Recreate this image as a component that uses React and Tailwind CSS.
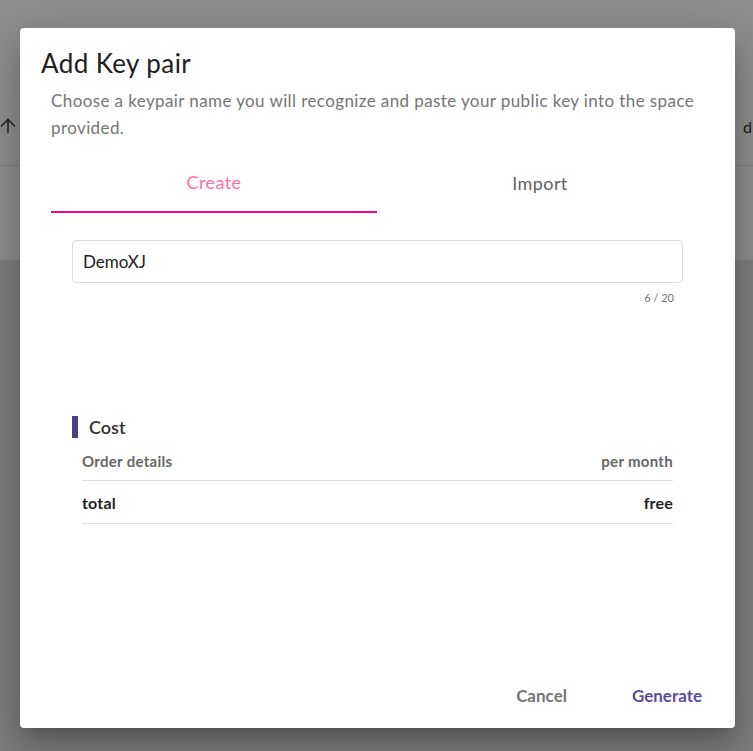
import { ArrowUp } from "lucide-react";

function CostTable() {
  return (
    <div className="mt-[5px] ml-[10px] mr-[10px]">
      <div className="flex justify-between py-[10px] border-b border-[#e0e0e0] text-[15px] leading-[17px] tracking-[0.3px] font-bold text-[#666666]">
        <span>Order details</span>
        <span>per month</span>
      </div>
      <div className="flex justify-between items-center h-[43px] border-b border-[#e0e0e0] text-[16px] leading-[17px] tracking-[0.2px] font-bold text-[#212121]">
        <span>total</span>
        <span>free</span>
      </div>
    </div>
  );
}

export default function App() {
  return (
    <div className="relative min-h-[751px] bg-[#e2e3e6] font-['Lato',sans-serif] overflow-hidden">
      {/* page behind the dialog */}
      <div className="h-[260px] bg-white">
        <div className="h-[166px] border-b border-[#e3e3e3] flex justify-between items-start pt-[115px] text-[#333333]">
          <ArrowUp size={22} strokeWidth={1.6} className="-ml-[3px]" />
          <span className="mt-[4px] mr-[1px] text-[16px] leading-[16px]">d</span>
        </div>
      </div>

      {/* backdrop */}
      <div className="absolute inset-0 bg-[rgba(0,0,0,0.44)]" />

      {/* dialog */}
      <div className="absolute left-[20px] top-[28px] w-[715px] h-[700px] bg-white rounded-[4px] flex flex-col shadow-[0px_11px_15px_-7px_rgba(0,0,0,0.2),0px_24px_38px_3px_rgba(0,0,0,0.14),0px_9px_46px_8px_rgba(0,0,0,0.12)]">
        <h2 className="pt-[20px] pl-[21px] text-[26px] leading-[30px] tracking-[0.4px] text-[#212121]">Add Key pair</h2>

        <div className="pl-[31px] pr-[32px]">
          <p className="mt-[9px] text-[17px] leading-[27px] tracking-[0.4px] text-[#757575]">
            Choose a keypair name you will recognize and paste your public key into the space provided.
          </p>

          {/* tabs */}
          <div className="mt-[8px] grid grid-cols-2 h-[64px] text-[18px] tracking-[0.4px]">
            <button className="flex items-center justify-center pt-[5px] border-b-2 border-[#f7077f] text-[#ff6ea6]">
              Create
            </button>
            <button className="flex items-center justify-center pt-[5px] text-[#616161]">Import</button>
          </div>

          {/* name field */}
          <div className="mt-[27px] pl-[21px] pr-[20px]">
            <div className="h-[43px] border border-[#dcdcdc] rounded-[4px] flex items-center px-[10px] text-[17px] text-[#212121]">
              DemoXJ
            </div>
            <div className="mt-[8px] pr-[9px] text-right text-[11px] leading-[13px] text-[#757575]">6 / 20</div>

            {/* cost */}
            <div className="mt-[112px] flex items-center gap-[11px]">
              <div className="w-[6px] h-[22px] bg-[#4a4287]" />
              <span className="text-[18px] leading-[22px] font-semibold text-[#333333]">Cost</span>
            </div>
            <CostTable />
          </div>
        </div>

        {/* actions */}
        <div className="mt-auto mb-[20px] flex justify-end pr-[17px] gap-[33px] text-[17px] leading-[24px] font-bold">
          <button className="px-[16px] text-[#757575]">Cancel</button>
          <button className="px-[16px] text-[#5b4c9e]">Generate</button>
        </div>
      </div>
    </div>
  );
}
